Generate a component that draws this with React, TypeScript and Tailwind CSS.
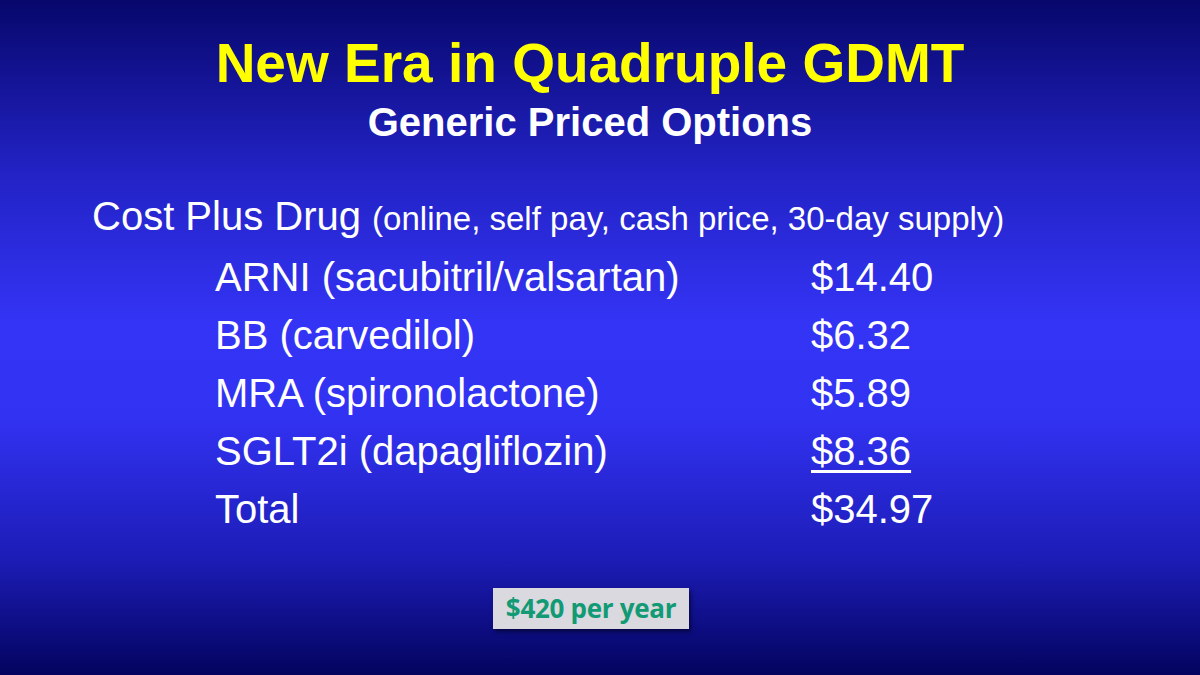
export default function App() {
  const rows = [
    { label: "ARNI (sacubitril/valsartan)", price: "$14.40" },
    { label: "BB (carvedilol)", price: "$6.32" },
    { label: "MRA (spironolactone)", price: "$5.89" },
    { label: "SGLT2i (dapagliflozin)", price: "$8.36", underline: true },
    { label: "Total", price: "$34.97" },
  ]

  return (
    <div
      className="w-[1200px] h-[675px] overflow-hidden bg-[linear-gradient(to_bottom,#07076c_0%,#2222c4_25%,#3434f6_48%,#3232f2_62%,#1c1cb6_83%,#03035e_100%)] text-white"
      style={{ fontFamily: '"Liberation Sans", Arial, sans-serif' }}
    >
      <div className="pt-[36px] pr-[20px] flex flex-col items-center">
        <h1 className="text-[55px] leading-[55px] font-bold text-[#ffff00]">New Era in Quadruple GDMT</h1>
        <h2 className="mt-[11px] text-[40px] leading-[40px] font-bold">Generic Priced Options</h2>
      </div>

      <div className="mt-[45px] pl-[92px] text-[40px] leading-[58px] whitespace-nowrap">
        Cost Plus Drug <span className="text-[33px]">(online, self pay, cash price, 30-day supply)</span>
      </div>

      <div className="pl-[215px]">
        {rows.map((r) => (
          <div key={r.label} className="flex text-[40px] leading-[58px] whitespace-nowrap">
            <div className="w-[596px]">{r.label}</div>
            <div className={r.underline ? "underline decoration-[3px] underline-offset-[5px]" : ""}>{r.price}</div>
          </div>
        ))}
      </div>

      <div className="mt-[50px] pl-[493px]">
        <div
          className="w-[196px] h-[41px] flex items-center justify-center bg-[#d9d9df] shadow-[2px_3px_4px_rgba(0,0,30,0.6)] text-[#119a74] text-[26px] font-bold tracking-[-0.3px]"
          style={{ fontFamily: '"Open Sans", sans-serif' }}
        >
          $420 per year
        </div>
      </div>
    </div>
  )
}
